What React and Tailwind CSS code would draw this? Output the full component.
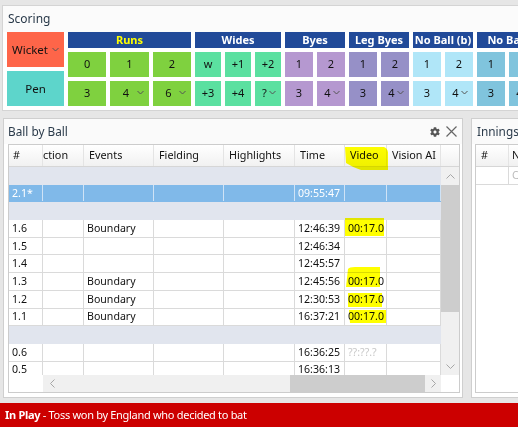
import React from "react";
import { FaCog } from "react-icons/fa";

const FONT = { fontFamily: '"Noto Sans", "Open Sans", Arial, sans-serif' };

function Chevron({ className = "" }) {
  return (
    <svg width="7" height="5" viewBox="0 0 7 5" className={className}>
      <polyline points="0.5,1 3.5,4 6.5,1" fill="none" stroke="#555" strokeWidth="1" />
    </svg>
  );
}

function Btn({ color, children, drop, className = "" }) {
  return (
    <div
      className={`relative flex items-center justify-center text-[11px] text-[#111] ${className}`}
      style={{ backgroundColor: color }}
    >
      <span className={drop ? "-ml-[7px]" : ""}>{children}</span>
      {drop && <Chevron className="absolute right-[5px] top-[9px]" />}
    </div>
  );
}

function Group({ title, color, cols, row1, row2, drops = [] }) {
  return (
    <div className="shrink-0 flex flex-col gap-[4px]" style={{ width: cols * 28 + (cols - 1) * 4 }}>
      <div className="h-[16px] bg-[#214a99] flex items-center justify-center text-[11px] font-bold text-white whitespace-nowrap">
        {title}
      </div>
      <div className="grid gap-[4px]" style={{ gridTemplateColumns: `repeat(${cols}, 1fr)` }}>
        {row1.map((t, i) => (
          <Btn key={i} color={color} className="h-[25px]">{t}</Btn>
        ))}
      </div>
      <div className="grid gap-[4px]" style={{ gridTemplateColumns: `repeat(${cols}, 1fr)` }}>
        {row2.map((t, i) => (
          <Btn key={i} color={color} className="h-[25px]" drop={drops.includes(i)}>{t}</Btn>
        ))}
      </div>
    </div>
  );
}

const COLS = [34, 41, 70, 70, 71, 50, 42, 54];
const HEAD = ["#", "ction", "Events", "Fielding", "Highlights", "Time", "Video", "Vision AI"];

const ROWS = [
  { type: "group" },
  { type: "sel", cells: ["2.1*", "", "", "", "", "09:55:47", "", ""] },
  { type: "group" },
  { cells: ["1.6", "", "Boundary", "", "", "12:46:39", "00:17.0", ""] },
  { cells: ["1.5", "", "", "", "", "12:46:34", "", ""] },
  { cells: ["1.4", "", "", "", "", "12:45:57", "", ""] },
  { cells: ["1.3", "", "Boundary", "", "", "12:45:56", "00:17.0", ""] },
  { cells: ["1.2", "", "Boundary", "", "", "12:30:53", "00:17.0", ""] },
  { cells: ["1.1", "", "Boundary", "", "", "16:37:21", "00:17.0", ""] },
  { type: "group" },
  { cells: ["0.6", "", "", "", "", "16:36:25", "??:??.?", ""], faint: 6 },
  { cells: ["0.5", "", "", "", "", "16:36:13", "", ""] },
];

function Row({ row }) {
  if (row.type === "group") {
    return <div className="h-[17.7px] shrink-0 bg-[#e1e5ee] border-b border-[#e1e5ee]" />;
  }
  const sel = row.type === "sel";
  return (
    <div className={`h-[17.7px] shrink-0 flex border-b ${sel ? "bg-[#80b9e9] border-[#80b9e9] text-white" : "bg-white border-[#dadada] text-[#111]"}`}>
      {COLS.map((w, i) => (
        <div
          key={i}
          className={`shrink-0 h-full border-r flex items-center overflow-hidden whitespace-nowrap text-[10.6px] pl-[3px] pt-[1px] ${sel ? "border-[#cfe3f6]" : "border-[#dadada]"} ${row.faint === i ? "text-[#c8c8c8]" : ""}`}
          style={{ width: w }}
        >
          {row.cells[i]}
        </div>
      ))}
    </div>
  );
}

function Marker({ d }) {
  return <path d={d} fill="#ffff00" />;
}

function BallByBall() {
  return (
    <div className="w-[460px] h-[280px] shrink-0 border border-[#cfcfcf] bg-white flex flex-col">
      <div className="h-[25px] shrink-0 flex items-center pl-[4px] pr-[4px] bg-[#fafafa]">
        <span className="text-[11.8px] text-[#2a3a4a] flex-1">Ball by Ball</span>
        <FaCog className="text-[#555] w-[10px] h-[10px] mr-[6px]" />
        <svg width="11" height="11" viewBox="0 0 11 11" className="mr-[1px]">
          <path d="M0.5 0.5 L10.5 10.5 M10.5 0.5 L0.5 10.5" stroke="#666" strokeWidth="1.2" />
        </svg>
      </div>
      <div className="ml-[4px] w-[452px] h-[249px] border border-[#cccccc] relative flex flex-col overflow-hidden">
        {/* column headers */}
        <div className="h-[22px] shrink-0 flex bg-gradient-to-b from-white to-[#f1f1f1] border-b border-[#d6d6d6]">
          {COLS.map((w, i) => (
            <div
              key={i}
              className={`shrink-0 h-full border-r border-[#e4e4e4] flex items-center whitespace-nowrap overflow-hidden text-[10.8px] text-[#111] ${i === 0 ? "pl-[4px]" : i === 1 ? "pl-0" : "pl-[5px]"}`}
              style={{ width: w }}
            >
              {HEAD[i]}
            </div>
          ))}
          <div className="flex-1" />
        </div>
        {/* body with vertical scrollbar */}
        <div className="h-[208px] shrink-0 flex">
          <div className="w-[432px] h-full overflow-hidden flex flex-col">
            {ROWS.map((r, i) => (
              <Row key={i} row={r} />
            ))}
          </div>
          <div className="w-[18px] h-full bg-[#f0f0f0] flex flex-col items-center">
            <div className="h-[18px] flex items-center justify-center">
              <svg width="9" height="5" viewBox="0 0 9 5">
                <polyline points="0.5,4.5 4.5,0.5 8.5,4.5" fill="none" stroke="#a6a6a6" strokeWidth="1" />
              </svg>
            </div>
            <div className="w-[18px] h-[127px] bg-[#cdcdcd]" />
            <div className="flex-1" />
            <div className="h-[17px] flex items-center justify-center">
              <svg width="9" height="5" viewBox="0 0 9 5">
                <polyline points="0.5,0.5 4.5,4.5 8.5,0.5" fill="none" stroke="#a6a6a6" strokeWidth="1" />
              </svg>
            </div>
          </div>
        </div>
        {/* horizontal scrollbar */}
        <div className="flex-1 flex">
          <div className="w-[34px] bg-white" />
          <div className="w-[398px] bg-[#f0f0f0] flex items-center">
            <div className="w-[18px] flex justify-center">
              <svg width="5" height="9" viewBox="0 0 5 9">
                <polyline points="4.5,0.5 0.5,4.5 4.5,8.5" fill="none" stroke="#a6a6a6" strokeWidth="1" />
              </svg>
            </div>
            <div className="ml-[229px] w-[135px] h-full bg-[#cdcdcd]" />
            <div className="flex-1 flex justify-center">
              <svg width="5" height="9" viewBox="0 0 5 9">
                <polyline points="0.5,0.5 4.5,4.5 0.5,8.5" fill="none" stroke="#a6a6a6" strokeWidth="1" />
              </svg>
            </div>
          </div>
          <div className="flex-1 bg-white" />
        </div>
        {/* marker highlights over the Video column */}
        <svg className="absolute left-0 top-0 pointer-events-none mix-blend-multiply" width="450" height="247">
          <Marker d="M336 2 L375 2 Q378 3 379 7 L379 25 L352 25 Q343 22 337 18 Z" />
          <Marker d="M336 73 L375 73 L375 91 L336 91 Z" />
          <Marker d="M339 124 Q340 122 346 122 L371 122 L371 142 L337 142 Z" />
          <Marker d="M339 148 L373 148 L373 162 L339 162 Z" />
          <Marker d="M340 165 L377 165 L377 178 L341 178 Z" />
        </svg>
      </div>
    </div>
  );
}

function Innings() {
  return (
    <div className="w-[60px] h-[280px] shrink-0 border border-[#cfcfcf] bg-white flex flex-col">
      <div className="h-[25px] shrink-0 flex items-center pl-[5px] bg-[#fafafa]">
        <span className="text-[11.8px] text-[#2a3a4a] whitespace-nowrap">Innings</span>
      </div>
      <div className="ml-[3px] flex-1 mb-[4px] border-l border-t border-b border-[#cccccc] flex flex-col">
        <div className="h-[22px] flex bg-gradient-to-b from-white to-[#f1f1f1] border-b border-[#d6d6d6]">
          <div className="w-[33px] border-r border-[#e4e4e4] pl-[5px] flex items-center text-[10.8px] text-[#111]">#</div>
          <div className="flex-1 pl-[3px] flex items-center text-[10.8px] text-[#111]">N</div>
        </div>
        <div className="h-[18px] flex border-b border-[#dadada]">
          <div className="w-[33px] border-r border-[#dadada]" />
          <div className="flex-1 pl-[3px] flex items-center text-[10.8px] text-[#bdbdbd]">C</div>
        </div>
      </div>
    </div>
  );
}

export default function App() {
  return (
    <div className="w-[518px] h-[427px] bg-[#e6e6e6] overflow-hidden flex flex-col" style={FONT}>
      {/* Scoring panel */}
      <div className="mt-[5px] ml-[2px] w-[580px] h-[106px] shrink-0 border border-[#d4d4d4] bg-white flex flex-col">
        <div className="h-[26px] shrink-0 flex items-center pl-[5px] bg-[#fbfbfb]">
          <span className="text-[12px] text-[#2a3a4a]">Scoring</span>
        </div>
        <div className="flex gap-[4px] pl-[4px]">
          <div className="w-[57px] shrink-0 flex flex-col gap-[4px]">
            <div className="h-[35px] bg-[#fe6549] relative flex items-center pl-[5px] text-[11.5px] text-[#111]">
              Wicket
              <Chevron className="absolute right-[5px] top-[15px]" />
            </div>
            <div className="h-[35px] bg-[#5dd5cb] flex items-center justify-center text-[11.5px] text-[#111]">Pen</div>
          </div>
          <div className="w-[123px] shrink-0 flex flex-col gap-[4px]">
            <div className="h-[16px] bg-[#214a99] flex items-center justify-center text-[11px] font-bold text-[#ffff00]">Runs</div>
            <div className="grid grid-cols-3 gap-[4px]">
              {["0", "1", "2"].map((t) => (
                <Btn key={t} color="#7fd13f" className="h-[25px]">{t}</Btn>
              ))}
            </div>
            <div className="grid grid-cols-3 gap-[4px]">
              <Btn color="#7fd13f" className="h-[25px]">3</Btn>
              <Btn color="#7fd13f" className="h-[25px]" drop>4</Btn>
              <Btn color="#7fd13f" className="h-[25px]" drop>6</Btn>
            </div>
          </div>
          <div className="w-[86px] shrink-0 flex flex-col gap-[4px]">
            <div className="h-[16px] bg-[#214a99] flex items-center justify-center text-[11px] font-bold text-white">Wides</div>
            <div className="grid grid-cols-3 gap-[4px]">
              {["w", "+1", "+2"].map((t) => (
                <Btn key={t} color="#5be0a0" className="h-[25px]">{t}</Btn>
              ))}
            </div>
            <div className="grid grid-cols-3 gap-[4px]">
              <Btn color="#5be0a0" className="h-[25px]">+3</Btn>
              <Btn color="#5be0a0" className="h-[25px]">+4</Btn>
              <Btn color="#5be0a0" className="h-[25px]" drop>?</Btn>
            </div>
          </div>
          <Group title="Byes" color="#b598d0" cols={2} row1={["1", "2"]} row2={["3", "4"]} drops={[1]} />
          <Group title="Leg Byes" color="#9690c7" cols={2} row1={["1", "2"]} row2={["3", "4"]} drops={[1]} />
          <Group title="No Ball (b)" color="#b0e6f8" cols={2} row1={["1", "2"]} row2={["3", "4"]} drops={[1]} />
          <Group title="No Ball" color="#80c4dd" cols={2} row1={["1", "2"]} row2={["3", "4"]} drops={[1]} />
        </div>
      </div>

      {/* Ball by Ball and Innings panels */}
      <div className="mt-[7px] ml-[3px] flex gap-[8px]">
        <BallByBall />
        <Innings />
      </div>

      {/* status bar */}
      <div className="mt-auto h-[24px] bg-[#cc0000] flex items-center pl-[5px] text-[11px] tracking-[-0.3px] text-white whitespace-nowrap">
        <span className="font-bold">In Play</span>
        <span>&nbsp;- Toss won by England who decided to bat</span>
      </div>
    </div>
  );
}
